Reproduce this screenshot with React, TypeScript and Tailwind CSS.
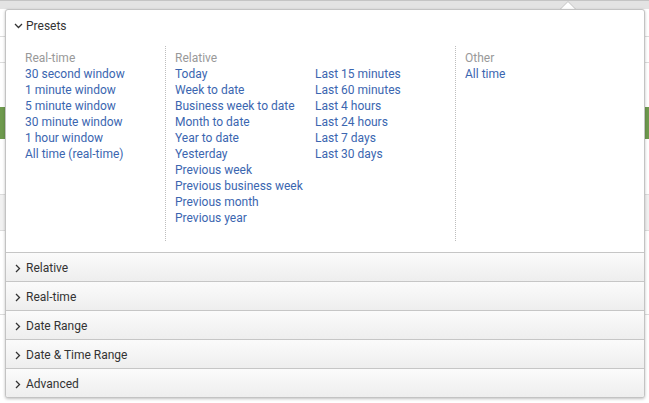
import React from "react";

const blue = "text-[#3b66b0]";

function ChevronDown() {
  return (
    <svg width="9" height="6" viewBox="0 0 9 6" className="shrink-0">
      <path d="M1 1 L4.5 4.5 L8 1" fill="none" stroke="#333" strokeWidth="1.3" />
    </svg>
  );
}

function ChevronRight() {
  return (
    <svg width="6" height="9" viewBox="0 0 6 9" className="shrink-0">
      <path d="M1 1 L4.5 4.5 L1 8" fill="none" stroke="#333" strokeWidth="1.3" />
    </svg>
  );
}

function Item({ children }: { children: React.ReactNode }) {
  return <div className={`h-4 pt-[2px] leading-[14px] ${blue} whitespace-nowrap`}>{children}</div>;
}

function Label({ children }: { children: React.ReactNode }) {
  return <div className="h-4 pt-[2px] leading-[14px] text-[#999] whitespace-nowrap">{children}</div>;
}

const rows = ["Relative", "Real-time", "Date Range", "Date & Time Range", "Advanced"];

export default function App() {
  return (
    <div className="relative w-[649px] h-[403px] overflow-hidden bg-white font-['Roboto',sans-serif] text-[12px]">
      {/* background page */}
      <div className="h-[9px] bg-[#e3e3e3] border-t border-[#c4c4c4]" />
      <div className="flex flex-col">
        <div className="h-[28px] border-b border-[#dcdcdc]" />
        <div className="h-[26px] border-b border-[#dcdcdc]" />
        <div className="h-[44px]" />
        <div className="h-[32px] bg-[#6e9a4e]" />
        <div className="h-[56px] border-b border-[#dcdcdc]" />
        <div className="h-[36px] bg-[#f1f1f1] border-b border-[#dcdcdc]" />
        <div className="h-[84px] border-b border-[#dcdcdc]" />
      </div>

      {/* caret */}
      <svg className="absolute left-[559px] top-[1px]" width="18" height="10" viewBox="0 0 18 10">
        <path d="M0 9.5 L9 0.5 L18 9.5" fill="#fff" stroke="#c3c3c3" strokeWidth="1" />
      </svg>

      {/* popover */}
      <div className="absolute left-[5px] top-[9px] w-[640px] h-[389px] bg-white border border-[#c3c3c3] rounded-[3px] shadow-[0_1px_3px_rgba(0,0,0,0.25)] flex flex-col overflow-hidden">
        <div className="h-[29px] shrink-0 flex items-center gap-[3px] pl-[8px] pt-[2px] text-[#333] text-[12px]">
          <ChevronDown />
          <span>Presets</span>
        </div>
        <div className="h-[213px] shrink-0 flex pl-[19px] pt-[7px]">
          <div className="w-[140px] pt-[3px]">
            <Label>Real-time</Label>
            <Item>30 second window</Item>
            <Item>1 minute window</Item>
            <Item>5 minute window</Item>
            <Item>30 minute window</Item>
            <Item>1 hour window</Item>
            <Item>All time (real-time)</Item>
          </div>
          <div className="w-[290px] h-[195px] border-l border-dotted border-[#bdbdbd] pl-[9px] pt-[3px]">
            <Label>Relative</Label>
            <div className="flex">
              <div className="w-[140px]">
                <Item>Today</Item>
                <Item>Week to date</Item>
                <Item>Business week to date</Item>
                <Item>Month to date</Item>
                <Item>Year to date</Item>
                <Item>Yesterday</Item>
                <Item>Previous week</Item>
                <Item>Previous business week</Item>
                <Item>Previous month</Item>
                <Item>Previous year</Item>
              </div>
              <div className="w-[140px]">
                <Item>Last 15 minutes</Item>
                <Item>Last 60 minutes</Item>
                <Item>Last 4 hours</Item>
                <Item>Last 24 hours</Item>
                <Item>Last 7 days</Item>
                <Item>Last 30 days</Item>
              </div>
            </div>
          </div>
          <div className="h-[195px] border-l border-dotted border-[#bdbdbd] pl-[9px] pt-[3px]">
            <Label>Other</Label>
            <Item>All time</Item>
          </div>
        </div>
        {rows.map((r) => (
          <div
            key={r}
            className="h-[29px] shrink-0 border-t border-[#c6c6c6] bg-gradient-to-b from-[#fbfbfb] to-[#eeeeee] flex items-center gap-[5px] pl-[9px] pt-[2px] text-[#333]"
          >
            <ChevronRight />
            <span>{r}</span>
          </div>
        ))}
      </div>
    </div>
  );
}
